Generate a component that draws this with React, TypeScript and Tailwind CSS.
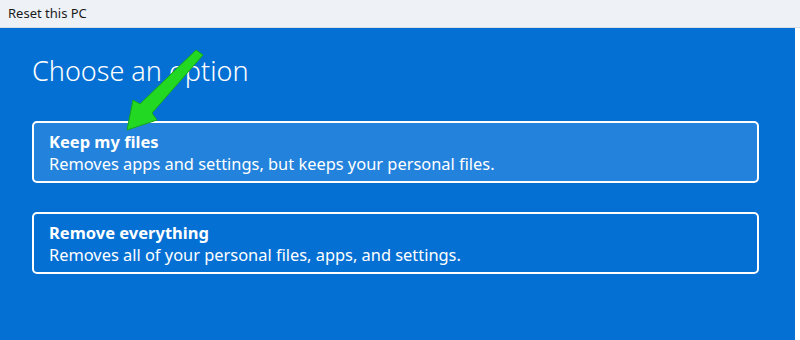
export default function App() {
  const font = { fontFamily: '"Segoe UI", "Noto Sans", "Open Sans", sans-serif' };
  return (
    <div className="w-[800px] h-[340px] flex flex-col bg-white overflow-hidden" style={font}>
      <div className="h-[28px] bg-[#eef2f7] flex items-center pl-[8px] text-[13px] text-[#1a1a1a] border-b border-[#d8dde4]">
        Reset this PC
      </div>
      <div className="relative flex-1 w-[795px] bg-[#0570d3] pl-[32px] pr-[36px] pt-[25px]">
        <div className="text-white text-[27px] font-light leading-[36px]">Choose an option</div>
        <div className="mt-[32px] flex flex-col gap-[29px]">
          <div className="h-[62px] rounded-[5px] border-2 border-white bg-[#2383dc] pl-[15px] flex flex-col justify-center text-white">
            <div className="text-[16.5px] font-bold leading-[21px]">Keep my files</div>
            <div className="text-[16.4px] leading-[21px] mt-[1px]">Removes apps and settings, but keeps your personal files.</div>
          </div>
          <div className="h-[62px] rounded-[5px] border-2 border-white pl-[15px] flex flex-col justify-center text-white">
            <div className="text-[16.5px] font-bold leading-[21px]">Remove everything</div>
            <div className="text-[16.4px] leading-[21px] mt-[1px]">Removes all of your personal files, apps, and settings.</div>
          </div>
        </div>
        <svg className="absolute left-0" width="300" height="200" viewBox="0 0 300 200" style={{ top: -28 }}>
          <path d="M196 50 L203 55 L152 113 L157 120 L127 130 L133 100 L140 104 Z" fill="#22d822" stroke="#17a817" strokeWidth="1" strokeLinejoin="round" />
        </svg>
      </div>
    </div>
  );
}
